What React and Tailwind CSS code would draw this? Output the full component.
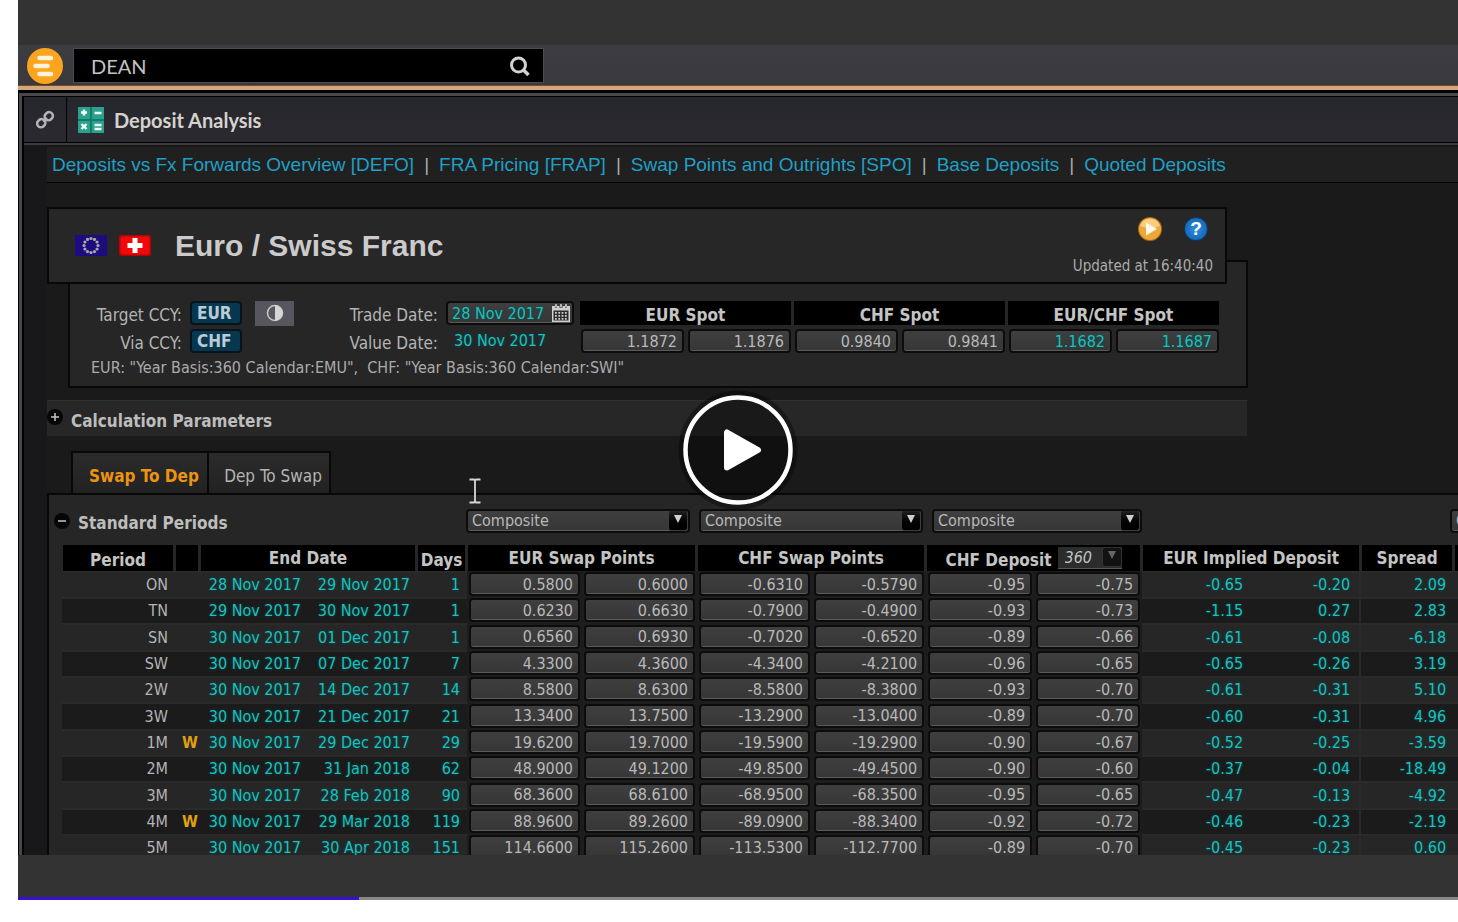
import React from 'react';

const links = [
  'Deposits vs Fx Forwards Overview [DEFO]',
  'FRA Pricing [FRAP]',
  'Swap Points and Outrights [SPO]',
  'Base Deposits',
  'Quoted Deposits',
];

const spots = [
  { name: 'EUR Spot', values: ['1.1872', '1.1876'] },
  { name: 'CHF Spot', values: ['0.9840', '0.9841'] },
  { name: 'EUR/CHF Spot', values: ['1.1682', '1.1687'], derived: true },
];

const columnWidths = [113, 25, 109, 108, 50, 115, 115, 115, 114, 108, 108, 110, 109, 93, 46];

const quoteColumns = [
  'EUR swap points bid',
  'EUR swap points ask',
  'CHF swap points bid',
  'CHF swap points ask',
  'CHF deposit bid',
  'CHF deposit ask',
];

const rows = [
  ['ON', '', '28 Nov 2017', '29 Nov 2017', '1', ['0.5800', '0.6000', '-0.6310', '-0.5790', '-0.95', '-0.75'], '-0.65', '-0.20', '2.09'],
  ['TN', '', '29 Nov 2017', '30 Nov 2017', '1', ['0.6230', '0.6630', '-0.7900', '-0.4900', '-0.93', '-0.73'], '-1.15', '0.27', '2.83'],
  ['SN', '', '30 Nov 2017', '01 Dec 2017', '1', ['0.6560', '0.6930', '-0.7020', '-0.6520', '-0.89', '-0.66'], '-0.61', '-0.08', '-6.18'],
  ['SW', '', '30 Nov 2017', '07 Dec 2017', '7', ['4.3300', '4.3600', '-4.3400', '-4.2100', '-0.96', '-0.65'], '-0.65', '-0.26', '3.19'],
  ['2W', '', '30 Nov 2017', '14 Dec 2017', '14', ['8.5800', '8.6300', '-8.5800', '-8.3800', '-0.93', '-0.70'], '-0.61', '-0.31', '5.10'],
  ['3W', '', '30 Nov 2017', '21 Dec 2017', '21', ['13.3400', '13.7500', '-13.2900', '-13.0400', '-0.89', '-0.70'], '-0.60', '-0.31', '4.96'],
  ['1M', 'W', '30 Nov 2017', '29 Dec 2017', '29', ['19.6200', '19.7000', '-19.5900', '-19.2900', '-0.90', '-0.67'], '-0.52', '-0.25', '-3.59'],
  ['2M', '', '30 Nov 2017', '31 Jan 2018', '62', ['48.9000', '49.1200', '-49.8500', '-49.4500', '-0.90', '-0.60'], '-0.37', '-0.04', '-18.49'],
  ['3M', '', '30 Nov 2017', '28 Feb 2018', '90', ['68.3600', '68.6100', '-68.9500', '-68.3500', '-0.95', '-0.65'], '-0.47', '-0.13', '-4.92'],
  ['4M', 'W', '30 Nov 2017', '29 Mar 2018', '119', ['88.9600', '89.2600', '-89.0900', '-88.3400', '-0.92', '-0.72'], '-0.46', '-0.23', '-2.19'],
  ['5M', '', '30 Nov 2017', '30 Apr 2018', '151', ['114.6600', '115.2600', '-113.5300', '-112.7700', '-0.89', '-0.70'], '-0.45', '-0.23', '0.60'],
];

const teal = 'text-[#1fbfbb] [text-shadow:0_0_3px_#005456]';
const field =
  'block h-6 w-full min-w-0 rounded-[4px] border-2 border-[#0c0c0c] bg-linear-to-b from-[#3f3f3f] to-[#363636] shadow-[inset_0_-1px_0_#5a5a5a]';

function QuoteInput({ label, value, derived }) {
  return (
    <input
      aria-label={label}
      defaultValue={value}
      className={`${field} pr-[5px] text-right ${derived ? teal : 'text-[#b9b9b9]'}`}
    />
  );
}

function SourceSelect({ label, className }) {
  return (
    <div className={`relative shrink-0 ${className}`}>
      <select aria-label={label} className={`${field} appearance-none pl-1 text-[16px] leading-5 text-[#b9b9b9]`}>
        <option>Composite</option>
      </select>
      <span className="pointer-events-none absolute top-[2px] right-[2px] flex h-5 w-5 items-center justify-center rounded-[3px] border border-[#3d3d3d] border-t-[#222] bg-linear-to-b from-[#1d1d1d] to-black">
        <svg viewBox="0 0 10 10" className="mb-1 h-[10px] w-[10px]" fill="#d0d0d0"><path d="M1 1h8L5 9z" /></svg>
      </span>
    </div>
  );
}

function HeadCell({ children, className = '', ...rest }) {
  return (
    <th
      {...rest}
      className={`border-r-2 border-l border-[#262626] bg-black p-0 text-center text-[17px] leading-5 font-bold whitespace-nowrap text-[#c4c4c4] ${className}`}
    >
      {children}
    </th>
  );
}

function Brand() {
  return (
    <svg viewBox="0 0 36 36" className="h-9 w-9 shrink-0" aria-label="Home">
      <circle cx="18" cy="18" r="18" fill="#fba51f" />
      <g stroke="#fff3da" strokeWidth="4.6" strokeLinecap="round">
        <path d="M12.500 10h11.500M8.500 18h12M12.500 26h11.500" />
      </g>
    </svg>
  );
}

function AppHeader() {
  return (
    <header className="flex h-[45px] shrink-0 items-center border-b-4 border-[#d3a67e] bg-linear-to-b from-[#3d3c43] to-[#3a393e] pl-[9px] shadow-[inset_0_-1px_0_#7a4a1c]">
      <Brand />
      <form className="ml-[10px] flex h-[35px] w-[471px] items-center border border-[#4c4b50] bg-black pr-3 pl-[17px]" onSubmit={(e) => e.preventDefault()}>
        <input
          aria-label="Search"
          defaultValue="DEAN"
          className="min-w-0 flex-1 bg-transparent font-['Lato',sans-serif] text-[20px] text-[#c3c3c3] outline-none"
        />
        <button type="submit" aria-label="Run search">
          <svg viewBox="0 0 22 22" className="h-[22px] w-[22px]" fill="none" stroke="#d2d2d2" strokeWidth="3">
            <circle cx="9.500" cy="10" r="7" />
            <path d="M14 14.500l5.500 5.500" strokeWidth="3.600" />
          </svg>
        </button>
      </form>
    </header>
  );
}

function TitleBar() {
  return (
    <div className="flex h-[46px] border-b border-black bg-linear-to-b from-[#26262d] to-[#2b2a30]">
      <button aria-label="Link window" className="flex w-[43px] items-center justify-center border-r border-black">
        <svg viewBox="0 0 20 20" className="h-5 w-5" fill="none" stroke="#b4b4b8" strokeWidth="2.500">
          <rect x="9.500" y="2.500" width="8.500" height="7.500" rx="3.700" transform="rotate(-40 13.700 6.200)" />
          <rect x="2" y="9.500" width="8.500" height="7.500" rx="3.700" transform="rotate(-40 6.200 13.200)" />
          <path d="M8 11.500l4-3.500" strokeWidth="2" />
        </svg>
      </button>
      <div className="flex items-center gap-[10px] pl-[11px]">
        <svg viewBox="0 0 26 26" className="h-[26px] w-[26px]">
          <rect width="26" height="26" fill="#0f7c6c" />
          <path d="M0 0h12v12H0zM14 0h12v12H14zM0 14h12v12H0zM14 14h12v12H14z" fill="#2c9f8d" />
          <g stroke="#effffb" strokeWidth="2.400">
            <path d="M6 2.500v6M3 5.500h6M16.500 6h7M3.500 17l5 5M8.500 17l-5 5M16.500 18h7M16.500 22h7" />
          </g>
        </svg>
        <h1 className="font-['Lato',sans-serif] text-[20px] font-bold text-[#d6d2ce]">Deposit Analysis</h1>
      </div>
    </div>
  );
}

function LinkBar() {
  return (
    <nav className="mt-[2px] flex h-9 items-center gap-[10px] border-b border-black bg-[#202021] pl-[5px] font-['Liberation_Sans',sans-serif] text-[19px] whitespace-nowrap">
      {links.map((text, i) => (
        <React.Fragment key={text}>
          {i > 0 && <span className="text-[#aaa]">|</span>}
          <a href="#" className="text-[#209fc4]">{text}</a>
        </React.Fragment>
      ))}
    </nav>
  );
}

function Flags() {
  const stars = Array.from({ length: 12 }, (_, i) => (i * Math.PI) / 6);
  return (
    <div className="flex gap-3">
      <svg viewBox="0 0 32 21" className="h-[21px] w-8" aria-label="European Union">
        <rect width="32" height="21" fill="#1c0c80" />
        {stars.map((a) => (
          <circle key={a} cx={16 + 7 * Math.cos(a)} cy={10.5 + 7 * Math.sin(a)} r="1.600" fill="#a9a9a0" />
        ))}
      </svg>
      <svg viewBox="0 0 32 21" className="h-[21px] w-8" aria-label="Switzerland">
        <rect width="32" height="21" rx="2" fill="#b00508" />
        <rect x="1.500" y="1.500" width="29" height="18" rx="2" fill="#f0080a" />
        <path d="M13.500 3h5v5h5v5h-5v5h-5v-5h-5v-5h5z" fill="#fff" />
      </svg>
    </div>
  );
}

function PairHeader() {
  return (
    <section className="relative z-10 flex h-[77px] w-[1180px] border-2 border-[#080808] bg-[#272728] pr-3 pl-[26px]">
      <div className="flex flex-1 items-center gap-6">
        <Flags />
        <h2 className="font-['Liberation_Sans',sans-serif] text-[30px] font-bold text-[#cbcbcb]">Euro / Swiss Franc</h2>
      </div>
      <div className="flex flex-col items-end justify-between pt-2 pb-[6px]">
        <div className="flex gap-[22px] pr-[5px]">
          <button aria-label="Run">
            <svg viewBox="0 0 24 24" className="h-6 w-6">
              <circle cx="12" cy="12" r="12" fill="#a9690c" />
              <circle cx="12" cy="12" r="11" fill="#eda83a" />
              <path d="M2 9a10.500 10.500 0 0 1 20 0q-10 4-20 0z" fill="#f8cd84" />
              <path d="M8 5.500v13L19 12z" fill="#fff8e6" />
            </svg>
          </button>
          <button aria-label="Help" className="relative h-6 w-6 rounded-full border border-[#083a6d] bg-radial from-[#2f8fe0] to-[#0b5aa8] font-['Liberation_Sans',sans-serif] text-[19px] leading-[22px] font-bold text-white">?</button>
        </div>
        <p className="text-[15px] leading-5 text-[#ababab]">Updated at 16:40:40</p>
      </div>
    </section>
  );
}

function PairDetails() {
  const ccy =
    'h-6 rounded-[4px] border-2 border-[#08141c] bg-[#07374f] pl-[5px] text-left text-[17px] leading-5 font-bold text-[#b9cbd6]';
  const label = 'pt-1 text-right text-[17px] leading-5 whitespace-nowrap text-[#b4b4b4]';
  return (
    <section className="-mt-6 ml-[21px] h-[128px] w-[1180px] border-2 border-[#080808] bg-[#262627] pt-[39px]">
      <div className="flex gap-[5px]">
        <div className="grid h-[52px] grid-cols-[112px_52px_44px_136px_128px] grid-rows-[24px_24px] items-center gap-x-2 gap-y-1">
          <span className={label}>Target CCY:</span>
          <button className={ccy}>EUR</button>
          <button aria-label="Swap currencies" className="ml-auto flex h-[25px] w-[39px] items-center justify-center bg-[#57565f]">
            <svg viewBox="0 0 18 18" className="h-[18px] w-[18px]">
              <circle cx="9" cy="9" r="7.500" fill="none" stroke="#c9c9c9" strokeWidth="1.500" />
              <path d="M9 1.500a7.500 7.500 0 0 1 0 15z" fill="#d5d5d5" />
            </svg>
          </button>
          <label htmlFor="trade-date" className={label}>Trade Date:</label>
          <div className="relative">
            <input id="trade-date" defaultValue="28 Nov 2017" className={`${field} pl-1 ${teal}`} />
            <svg viewBox="0 0 18 18" className="pointer-events-none absolute top-[3px] right-1 h-[18px] w-[18px]" fill="#cfcfcf">
              <path d="M0 2h3v2h2V2h2.500v2h3V2H13v2h2V2h3v16H0z" />
              <path d="M3.200 0h1.600v3.500H3.200zM8.200 0h1.600v3.500H8.200zM13.200 0h1.600v3.500h-1.600z" />
              <path d="M1.500 6.500h15v10h-15z" fill="#2c2c2c" />
              <path d="M3 8.800h12.500M3 11.800h12.500M3 14.800h12.500" stroke="#cfcfcf" strokeWidth="1.700" strokeDasharray="1.800 1.500" />
            </svg>
          </div>
          <span className={label}>Via CCY:</span>
          <button className={ccy}>CHF</button>
          <span />
          <span className={label}>Value Date:</span>
          <span className={`pl-2 ${teal}`}>30 Nov 2017</span>
        </div>
        <table className="w-[642px] table-fixed border-separate border-spacing-0">
          <thead>
            <tr className="h-6">
              {spots.map((s) => (
                <HeadCell key={s.name} colSpan={2} className="pt-1">{s.name}</HeadCell>
              ))}
            </tr>
          </thead>
          <tbody>
            <tr>
              {spots.flatMap((s) =>
                s.values.map((v, i) => (
                  <td key={s.name + i} className="px-[2px] pt-1 pb-0">
                    <QuoteInput label={`${s.name} ${i ? 'ask' : 'bid'}`} value={v} derived={s.derived} />
                  </td>
                )),
              )}
            </tr>
          </tbody>
        </table>
      </div>
      <p className="mt-[5px] pl-[21px] text-[16px] leading-5 whitespace-pre text-[#ababab]">
        {'EUR: "Year Basis:360 Calendar:EMU",  CHF: "Year Basis:360 Calendar:SWI"'}
      </p>
    </section>
  );
}

function Toggle({ open }) {
  return (
    <svg viewBox="0 0 16 16" className="mb-1 h-4 w-4 shrink-0">
      <circle cx="8" cy="8" r="8" fill="#060606" />
      <path d={open ? 'M4 8h8' : 'M4 8h8M8 4v8'} stroke="#c4c4c4" strokeWidth="1.500" />
    </svg>
  );
}

function PeriodsTable() {
  const stripe = 'border-t-2 border-[#2a2a2a] p-0 whitespace-nowrap group-even:bg-[#1b1b1b]';
  return (
    <table className="ml-[13px] w-[1438px] table-fixed border-separate border-spacing-0 bg-[#262626]">
      <colgroup>
        {columnWidths.map((w, i) => (
          <col key={i} style={{ width: w }} />
        ))}
      </colgroup>
      <thead>
        <tr className="h-[26px]">
          <HeadCell className="pt-1">Period</HeadCell>
          <HeadCell aria-label="Warning" />
          <HeadCell colSpan={2}>End Date</HeadCell>
          <HeadCell className="pt-1">Days</HeadCell>
          <HeadCell colSpan={2}>EUR Swap Points</HeadCell>
          <HeadCell colSpan={2}>CHF Swap Points</HeadCell>
          <HeadCell colSpan={2}>
            <div className="flex items-center justify-center gap-[6px]">
              <span className="pt-1">CHF Deposit</span>
              <span className="relative w-16">
                <select aria-label="Day basis" className="block h-[22px] w-full appearance-none border-b border-[#555] bg-[#2b2d2c] pl-[7px] text-[16px] leading-5 font-normal text-[#c4c4c4] italic">
                  <option>360</option>
                </select>
                <span className="pointer-events-none absolute top-0 right-0 flex h-5 w-5 items-center justify-center rounded-[3px] border border-[#333] bg-[#121212]">
                  <svg viewBox="0 0 10 10" className="mb-1 h-[10px] w-[10px]" fill="#666"><path d="M1 1h8L5 9z" /></svg>
                </span>
              </span>
            </div>
          </HeadCell>
          <HeadCell colSpan={2}>EUR Implied Deposit</HeadCell>
          <HeadCell>Spread</HeadCell>
          <HeadCell aria-label="Source" />
        </tr>
      </thead>
      <tbody>
        {rows.map(([period, flag, start, end, days, quotes, bid, ask, spread]) => (
          <tr key={period} className="group h-[26px] nth-[3n]:h-[27px]">
            <td className={`${stripe} pr-[7px] text-right text-[#b4b4b4]`}>{period}</td>
            <td className={`${stripe} pr-[2px] text-right font-bold text-[#dfa012]`}>{flag}</td>
            <td className={`${stripe} pr-2 text-right ${teal}`}>{start}</td>
            <td className={`${stripe} pr-[7px] text-right ${teal}`}>{end}</td>
            <td className={`${stripe} pr-[7px] text-right ${teal}`}>{days}</td>
            {quotes.map((q, i) => (
              <td key={i} className="bg-[#1d1d1d] px-[2px] py-0">
                <QuoteInput label={`${period} ${quoteColumns[i]}`} value={q} />
              </td>
            ))}
            <td className={`${stripe} pr-[9px] text-right ${teal}`}>{bid}</td>
            <td className={`${stripe} border-r-2 pr-[9px] text-right ${teal}`}>{ask}</td>
            <td className={`${stripe} pr-2 text-right ${teal}`}>{spread}</td>
            <td className={stripe} />
          </tr>
        ))}
      </tbody>
    </table>
  );
}

function Workspace() {
  const tab = 'border-[#080808] bg-linear-to-b from-[#2b2b2b] to-[#222] pt-[6px] pl-2 text-[17px] leading-5';
  return (
    <div className="flex flex-1 flex-col bg-black pt-[3px] pl-px">
      <div className="flex-1 border-t-[3px] border-l-[3px] border-[#48484b]">
        <div className="h-full border-t border-l-2 border-black bg-[#18181b]">
          <TitleBar />
          <div className="border-t-2 border-[#3c3c3f] pl-[23px]">
            <div className="bg-[#1a1a1a]">
              <LinkBar />
              <div className="h-6" />
              <PairHeader />
              <PairDetails />
              <button className="mt-3 flex h-9 w-[1200px] items-center gap-2 border-t border-[#303030] bg-[#272727] text-left text-[17px] leading-5 font-bold text-[#bdbdbd]">
                <Toggle />
                <span className="pt-1">Calculation Parameters</span>
              </button>
              <div role="tablist" className="mt-[15px] ml-6 flex h-[42px]">
                <button role="tab" aria-selected="true" className={`w-[138px] border-2 border-b-0 font-bold text-[#ec9312] ${tab}`}>Swap To Dep</button>
                <button role="tab" aria-selected="false" className={`w-[122px] border-t-2 border-r-2 text-[#b4b4b4] ${tab}`}>Dep To Swap</button>
              </div>
              <section className="overflow-hidden border-t-2 border-l-2 border-[#080808] bg-[#262626]">
                <div className="flex h-[50px] items-center gap-[9px]">
                  <h3 className="w-[408px] shrink-0 text-[17px] leading-5 font-bold text-[#bdbdbd]">
                    <button className="flex items-center gap-2 pt-[5px] pl-[5px]">
                      <Toggle open />
                      Standard Periods
                    </button>
                  </h3>
                  <SourceSelect label="EUR swap source" className="mt-[2px] w-56" />
                  <SourceSelect label="CHF swap source" className="mt-[2px] w-56" />
                  <SourceSelect label="CHF deposit source" className="mt-[2px] w-[210px]" />
                  <SourceSelect label="Spread source" className="mt-[2px] ml-[299px] w-[200px]" />
                </div>
                <PeriodsTable />
              </section>
            </div>
          </div>
        </div>
      </div>
    </div>
  );
}

export default function App() {
  return (
    <main className="overflow-hidden bg-white pl-[18px] font-['DejaVu_Sans_Condensed','DejaVu_Sans',sans-serif] text-[16px] leading-5">
      <div className="relative flex aspect-[8/5] w-full flex-col bg-[#333] pt-[45px]">
        <div className="relative flex aspect-video min-h-0 w-full shrink-0 flex-col overflow-hidden">
          <AppHeader />
          <Workspace />
          <svg viewBox="0 0 14 26" className="pointer-events-none absolute top-[433px] left-[450px] h-[26px] w-[14px]" fill="none" stroke="#d8d8d8" strokeWidth="1.800">
            <path d="M1.500 1.500h4.500l1 1 1-1h4.500M1.500 24.500h4.500l1-1 1 1h4.500M7 2v22" />
          </svg>
        </div>
        <div className="flex-1" />
        <div role="progressbar" aria-label="Played" aria-valuenow={24} className="h-[3px] bg-[#888]">
          <div className="h-full bg-[#3811d0]" style={{ width: '23.7%' }} />
        </div>
        <div className="pointer-events-none absolute inset-0 z-20 flex items-center justify-center">
          <button aria-label="Play video" className="pointer-events-auto rounded-full">
            <svg viewBox="0 0 120 120" className="h-[120px] w-[120px]">
              <circle cx="60" cy="60" r="59.500" fill="#000" fillOpacity="0.35" />
              <circle cx="60" cy="60" r="52.500" fill="none" stroke="#fff" strokeWidth="4.500" />
              <path d="M49 42.500v35L80 60z" fill="#fff" stroke="#fff" strokeWidth="6" strokeLinejoin="round" />
            </svg>
          </button>
        </div>
      </div>
      <div className="h-[22px]" />
    </main>
  );
}
